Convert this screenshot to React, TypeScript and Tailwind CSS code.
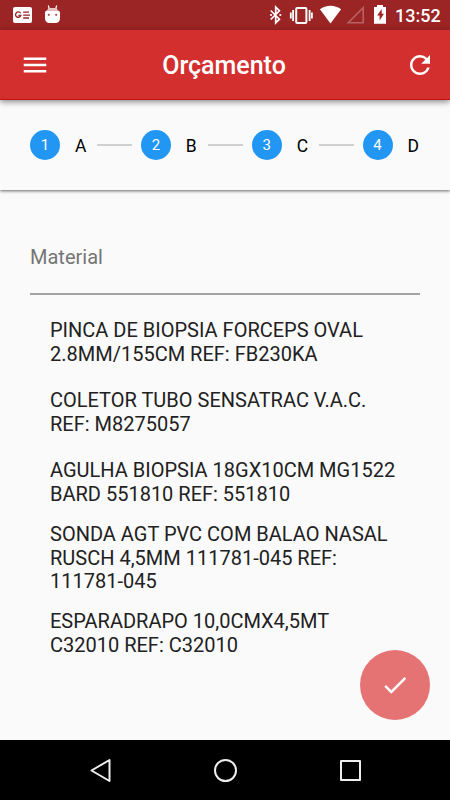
const STEPS = [
  { number: 1, label: 'A' },
  { number: 2, label: 'B' },
  { number: 3, label: 'C' },
  { number: 4, label: 'D' },
];

const MATERIALS = [
  ['PINCA DE BIOPSIA FORCEPS OVAL', '2.8MM/155CM REF: FB230KA'],
  ['COLETOR TUBO SENSATRAC V.A.C.', 'REF: M8275057'],
  ['AGULHA BIOPSIA 18GX10CM MG1522', 'BARD 551810 REF: 551810'],
  ['SONDA AGT PVC COM BALAO NASAL', 'RUSCH 4,5MM 111781-045 REF:', '111781-045'],
  ['ESPARADRAPO 10,0CMX4,5MT', 'C32010 REF: C32010'],
];

function StatusBar() {
  return (
    <div className="flex h-[30px] shrink-0 items-center justify-between bg-[#9b2424] text-white">
      <svg width="70" height="30" fill="none">
        <rect x="13" y="7" width="19" height="16" rx="2" fill="#fff" />
        <path d="M20.6 13.3a2.7 2.7 0 1 0 .2 2.2h-2.4M23.2 12.2H29M23.2 15.1h6.8M23.2 18H29" stroke="#9b2424" strokeWidth="1.3" />
        <path d="M48.3 5.5l1.2 4M56.7 5.5l-1.2 4" stroke="#fff" strokeWidth="1.2" />
        <path d="M47 10.5l1.5-2.5h8l1.5 2.5z" fill="#e6c4c4" />
        <path d="M45 12.8c0-1.3.8-2.3 2.2-2.3h10.6c1.4 0 2.2 1 2.2 2.3v5.5c0 3-1.8 4.7-4.7 4.7h-5.6c-2.9 0-4.7-1.7-4.7-4.7z" fill="#fff" />
        <circle cx="48.8" cy="14.8" r="1.1" fill="#b04a4a" />
        <circle cx="56.2" cy="14.8" r="1.1" fill="#b04a4a" />
      </svg>
      <div className="flex items-center">
        <svg width="130" height="30" fill="none">
          <path d="M10.7 10.5l8.7 8.7-3.7 3.7V7.1l3.7 3.7-8.7 8.7" stroke="#fff" strokeWidth="1.7" />
          <circle cx="11" cy="15" r="1.1" fill="#fff" />
          <circle cx="20.3" cy="15" r="1.1" fill="#fff" />
          <rect x="36.2" y="8" width="10.2" height="15" rx="1" stroke="#fff" strokeWidth="2" />
          <path d="M33.1 10v11M49.6 10v11M30.8 12.4v6M51.9 12.4v6" stroke="#fff" strokeWidth="1.8" />
          <path d="M70.5 23.6L59.9 9.2c6-4.7 15.2-4.7 21.2 0z" fill="#fff" />
          <path d="M103.2 7.8v14.9H88.3z" stroke="#b86161" strokeWidth="1.6" />
          <path d="M117 5h6v2h3v16.7h-12V7h3z" fill="#fff" />
          <path d="M121.7 9l-4.6 6.6h2.5v5l4.4-6.8h-2.3z" fill="#9b2424" />
        </svg>
        <span className="w-[60px] pt-px pl-[5px] text-[18px] leading-[30px] font-medium">13:52</span>
      </div>
    </div>
  );
}

function AppBar() {
  return (
    <header className="z-10 flex h-[70px] shrink-0 items-center justify-between border-b border-[#c50e0e] bg-[#d32f2f] pr-[15px] pl-5 text-white shadow-[0_2px_6px_rgba(0,0,0,0.45)]">
      <svg className="size-[30px]" viewBox="0 0 24 24" fill="currentColor">
        <path d="M3 18h18v-2H3v2zm0-5h18v-2H3v2zm0-7v2h18V6H3z" />
      </svg>
      <h1 className="mr-[7px] pt-[2px] text-[25px] leading-[30px] font-medium">Orçamento</h1>
      <svg className="size-[30px]" viewBox="0 0 24 24" fill="currentColor">
        <path d="M17.65 6.35A7.958 7.958 0 0 0 12 4c-4.42 0-7.99 3.58-7.99 8s3.57 8 7.99 8c3.73 0 6.84-2.55 7.73-6h-2.08A5.99 5.99 0 0 1 12 18c-3.31 0-6-2.69-6-6s2.69-6 6-6c1.66 0 3.14.69 4.22 1.78L13 11h7V4l-2.35 2.35z" />
      </svg>
    </header>
  );
}

function Stepper() {
  return (
    <div className="flex h-[90px] shrink-0 items-center pr-[31px] pl-[30px] shadow-[0_1px_3px_rgba(0,0,0,0.6)]">
      {STEPS.map((step, i) => (
        <div key={step.number} className={i < STEPS.length - 1 ? 'flex flex-1 items-center' : 'flex items-center'}>
          <span className="flex size-[30px] items-center justify-center rounded-full bg-[#2196f3] text-[15px] text-white">
            {step.number}
          </span>
          <span className="ml-[15px] pt-px text-[17.5px] leading-[24px] text-black">{step.label}</span>
          {i < STEPS.length - 1 && <span className="mr-[9px] ml-[11px] h-[2px] flex-1 bg-[#d0d0d0]" />}
        </div>
      ))}
    </div>
  );
}

function NavigationBar() {
  return (
    <nav className="flex h-[60px] shrink-0 bg-black">
      <svg width="450" height="60" fill="none" stroke="#eee" strokeWidth="2" strokeLinejoin="round">
        <path d="M91.5 30.5l18-10.5v21z" />
        <circle cx="225.5" cy="30.5" r="10.5" />
        <rect x="341" y="21" width="19" height="19" />
      </svg>
    </nav>
  );
}

export default function App() {
  return (
    <div className="flex h-[800px] w-[450px] flex-col overflow-hidden bg-[#fafafa] font-['Roboto',sans-serif]">
      <StatusBar />
      <AppBar />
      <Stepper />
      <main className="relative flex-1 px-[30px] pt-[55px]">
        <div className="h-[50px] border-b-2 border-[#a3a3a3] text-[20px] leading-[25px] text-[#757575]">Material</div>
        <ul className="pt-[13px] pl-5">
          {MATERIALS.map(lines => (
            <li
              key={lines[0]}
              className="flex min-h-[70px] flex-col justify-center py-[5px] text-[20px] leading-[23.6px] whitespace-nowrap text-[#212121]"
            >
              {lines.map(line => (
                <span key={line}>{line}</span>
              ))}
            </li>
          ))}
        </ul>
        <button className="absolute right-5 bottom-5 flex size-[70px] items-center justify-center rounded-full bg-[#e57373] text-white">
          <svg className="size-[30px]" viewBox="0 0 24 24" fill="currentColor">
            <path d="M9 16.17L4.83 12l-1.42 1.41L9 19 21 7l-1.41-1.41z" />
          </svg>
        </button>
      </main>
      <NavigationBar />
    </div>
  );
}
